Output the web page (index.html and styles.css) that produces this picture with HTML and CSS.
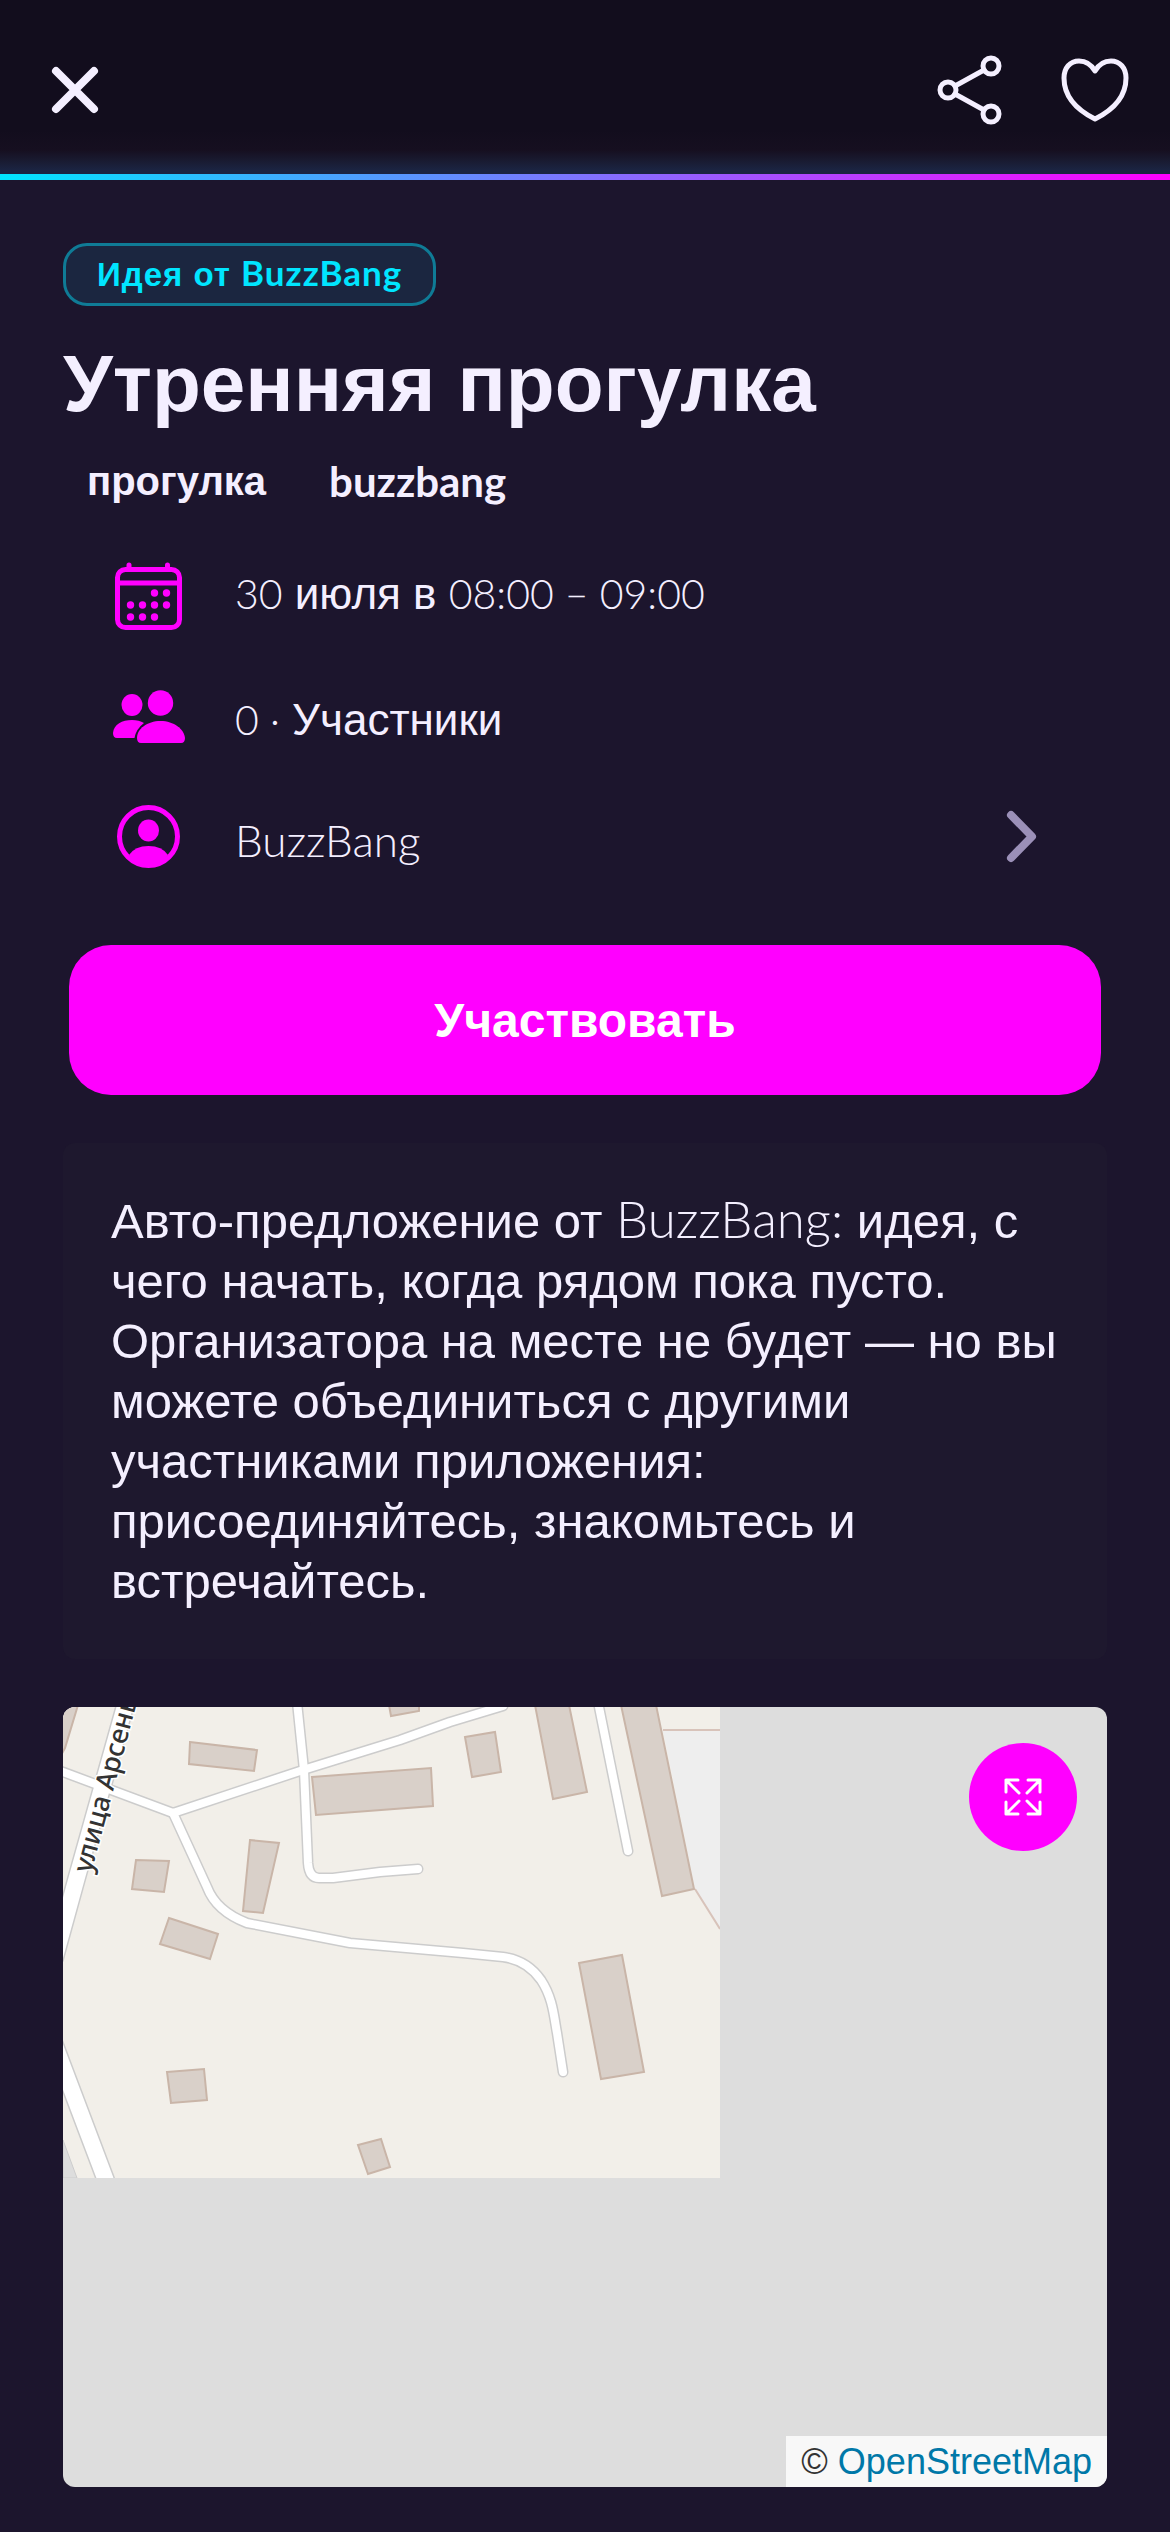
FILE: index.html
```html
<!DOCTYPE html>
<html lang="ru">
<head>
<meta charset="utf-8">
<meta name="viewport" content="width=device-width, initial-scale=1">
<title>Утренняя прогулка</title>
<link rel="stylesheet" href="styles.css">
</head>
<body>
<header class="topbar">
  <button class="icon-button" type="button" aria-label="Закрыть">
    <svg width="70" height="70" viewBox="0 0 70 70"><path d="M16 16 54 54M54 16 16 54" stroke-width="8"/></svg>
  </button>
  <div class="topbar-actions">
    <button class="icon-button" type="button" aria-label="Поделиться">
      <svg width="70" height="70" viewBox="0 0 70 70"><g stroke-width="5"><circle cx="13" cy="35" r="8"/><circle cx="56" cy="11" r="8"/><circle cx="56" cy="59" r="8"/><path d="M20 31 49 15M20 39 49 55"/></g></svg>
    </button>
    <button class="icon-button" type="button" aria-label="В избранное">
      <svg width="70" height="70" viewBox="0 0 70 70"><path d="M35 16C31 9 26 6 19 6C10 6 4 13 4 23C4 42 17 55 35 64C53 55 66 42 66 23C66 13 60 6 51 6C44 6 39 9 35 16Z" stroke-width="5"/></svg>
    </button>
  </div>
</header>
<main class="event">
  <p class="badge">Идея от <span class="latin">BuzzBang</span></p>
  <h1 class="title">Утренняя прогулка</h1>
  <ul class="tags"><li>прогулка</li><li class="latin">buzzbang</li></ul>
  <ul class="details">
    <li class="detail detail-date">
      <svg class="detail-icon" width="72" height="72" viewBox="0 0 72 72">
        <g fill="none" stroke="currentColor" stroke-width="5"><rect x="4.500" y="11.500" width="62" height="58" rx="8"/><path d="M5 25H66"/><path d="M16 7V11M54.500 7V11" stroke-linecap="round"/></g>
        <g fill="currentColor"><circle cx="41.500" cy="35" r="3.700"/><circle cx="53.500" cy="35" r="3.700"/><circle cx="17.500" cy="47" r="3.700"/><circle cx="29.500" cy="47" r="3.700"/><circle cx="41.500" cy="47" r="3.700"/><circle cx="53.500" cy="47" r="3.700"/><circle cx="17.500" cy="59" r="3.700"/><circle cx="29.500" cy="59" r="3.700"/><circle cx="41.500" cy="59" r="3.700"/></g>
      </svg>
      <span><span class="latin number">30</span> июля в <span class="latin number">08:00 – 09:00</span></span>
    </li>
    <li class="detail">
      <svg class="detail-icon" width="72" height="72" viewBox="0 0 72 72" fill="currentColor">
        <ellipse cx="19" cy="21" rx="10.500" ry="11"/><circle cx="47.500" cy="19" r="12.700"/>
        <path d="M0 49C1 40 9 36 19 36Q26 36 31 39Q23 45 21.500 54H4Q0 54 0 49Z"/>
        <path d="M24 54C24 45 34 37 47.500 37C61 37 71 45 72 54Q72 59 68 59H28Q24 59 24 54Z"/>
      </svg>
      <span><span class="latin number">0 ·</span> Участники</span>
    </li>
    <li>
      <a class="detail" href="#organizer">
        <svg class="detail-icon" width="72" height="72" viewBox="0 0 72 72">
          <circle cx="35.500" cy="32.500" r="29" fill="none" stroke="currentColor" stroke-width="5"/>
          <g fill="currentColor"><ellipse cx="35.500" cy="26.500" rx="10.500" ry="11"/><path d="M16 51Q22 42 35.500 42Q49 42 55 51Q47 61.500 35.500 61.500Q24 61.500 16 51Z"/></g>
        </svg>
        <span class="latin">BuzzBang</span>
        <svg class="chevron" width="36" height="60" viewBox="0 0 36 60" fill="none" stroke="currentColor" stroke-width="8" stroke-linecap="round" stroke-linejoin="round"><path d="M6 5 27 26.500 6 48"/></svg>
      </a>
    </li>
  </ul>
  <button class="join" type="button">Участвовать</button>
  <p class="description">Авто-предложение от <span class="latin">BuzzBang:</span> идея, с чего начать, когда рядом пока пусто. Организатора на месте не будет — но вы можете объединиться с другими участниками приложения: присоединяйтесь, знакомьтесь и встречайтесь.</p>
  <section class="map" aria-label="Карта">
    <svg class="tile" width="657" height="471" viewBox="0 0 657 471">
      <defs>
        <g id="paths">
          <path d="M-5 63 0 65 110 106 240 63 337 33 387 15 440-1"/>
          <path d="M110 106 144 180Q153 204 184 216L287 236 400 246 440 250Q464 253 478 273C490 291 491 310 494 326L500 365"/>
          <path d="M234-5 241 63 245 156Q246 171 256 171H270L317 165 355 162"/>
          <path d="M535-5 565 144"/>
        </g>
        <g id="streets"><path d="M66-15 14 170-8 250"/><path d="M-12 328 42 471 50 495"/></g>
      </defs>
      <path d="M0 0H657V471H0Z" fill="#f2efe9"/>
      <path d="M0 433 14 471H0Z" fill="#ddd" stroke="#ccc"/>
      <path d="M600 23H657V222L632 182Z" fill="#eee"/>
      <path d="M600 23H657M632 182 657 222" stroke="#d8c3ba" stroke-width="2"/>
      <g fill="none" stroke-linecap="round" stroke-linejoin="round">
        <use href="#paths" stroke="#ccc" stroke-width="11"/>
        <use href="#streets" stroke="#ccc" stroke-width="19"/>
        <use href="#paths" stroke="#fff" stroke-width="8"/>
        <use href="#streets" stroke="#fff" stroke-width="16"/>
      </g>
      <path fill="#d9d0c9" stroke="#c9b5a8" stroke-width="2" d="M-3-2H15L2 41-3 50ZM127 35 194 43 191 64 126 57ZM249 70 368 61 370 99 253 108ZM187 133 216 136 200 206 180 204ZM73 153 106 154 101 185 69 182ZM106 211 155 227 147 252 97 237ZM326-2H356V4L328 9ZM402 30 432 25 438 65 409 70ZM472-2H506L524 85 490 92ZM558-2H593L631 182 599 189ZM516 256 559 248 581 365 538 372ZM104 365 141 362 144 393 108 396ZM295 438 318 432 327 460 305 467Z"/>
      <text class="street-name" transform="translate(28 167) rotate(-75)">улица Арсень</text>
    </svg>
    <button class="expand" type="button" aria-label="Развернуть карту">
      <svg width="42" height="42" viewBox="0 0 42 42" fill="none" stroke="currentColor" stroke-width="3" stroke-linecap="round" stroke-linejoin="round"><path d="M16 4H4V16M4 4 17 17M26 4H38V16M38 4 25 17M16 38H4V26M4 38 17 25M26 38H38V26M38 38 25 25"/></svg>
    </button>
    <p class="credit">© <a href="#osm">OpenStreetMap</a></p>
  </section>
</main>
</body>
</html>
```
FILE: styles.css
```css
* { box-sizing: border-box; }
body {
  margin: 0;
  background: #1c152d;
  color: #f4efff;
  font-family: "Liberation Sans", Arial, sans-serif;
}
p, h1, ul { margin: 0; padding: 0; }
ul { list-style: none; }
button { border: 0; padding: 0; font: inherit; cursor: pointer; }
a { color: inherit; text-decoration: none; }
svg { display: block; flex: none; }
.latin { font-family: Lato, "Open Sans", sans-serif; }
p .latin { line-height: 1; }

.topbar {
  display: flex;
  align-items: center;
  justify-content: space-between;
  height: 180px;
  padding: 0 40px;
  border-bottom: 6px solid;
  border-image: linear-gradient(to right, #00e5ff, #ff00ff) 1;
  background: linear-gradient(to top, #1b2442 4px, #191a30 14px, #160f20 24px, #120d1d 44px);
}
.topbar-actions { display: flex; gap: 55px; }
.icon-button { background: none; color: inherit; padding-top: 6px; }
.icon-button svg { fill: none; stroke: currentColor; stroke-linecap: round; stroke-linejoin: round; }

.event { display: flex; flex-direction: column; align-items: stretch; padding: 63px 63px 45px; }
.badge {
  align-self: flex-start;
  padding: 0 31px;
  border: 3px solid #0f7b96;
  border-radius: 24px;
  background: #1b2640;
  color: #00e5ff;
  font-size: 33px;
  font-weight: 700;
  line-height: 57px;
  letter-spacing: 1px;
}
.badge .latin { font-size: 35px; }
.title { margin-top: 33px; font-size: 80px; line-height: 90px; font-weight: 700; }
.tags { display: flex; gap: 63px; margin-top: 28px; padding-left: 24px; font-size: 40px; line-height: 48px; font-weight: 700; }
.tags .latin { font-size: 42px; }
.details { margin-top: 23px; padding: 0 66px 0 50px; font-size: 44px; line-height: 48px; }
.details .latin { font-weight: 300; }
.details .number { font-size: 41px; }
.detail { display: flex; align-items: center; gap: 50px; height: 120px; }
.detail-date { height: 132px; }
.detail-icon { color: #ff00ff; }
.chevron { margin-left: auto; color: #9b90b8; }
.join {
  height: 150px;
  margin: 45px 6px 48px;
  border-radius: 42px;
  background: #ff00ff;
  color: #fff;
  font-size: 48px;
  font-weight: 700;
}
.description { padding: 48px; border-radius: 12px; background: #1e182e; font-size: 49px; line-height: 60px; }
.description .latin { font-size: 51px; font-weight: 300; }

.map { position: relative; height: 780px; margin-top: 48px; overflow: hidden; border-radius: 12px; background: #ddd; }
.street-name { font-family: "Noto Sans", sans-serif; font-size: 27px; font-weight: 500; fill: #333; stroke: #fff; stroke-width: 3px; paint-order: stroke; }
.expand {
  position: absolute;
  top: 36px;
  right: 30px;
  display: grid;
  place-items: center;
  width: 108px;
  height: 108px;
  border-radius: 50%;
  background: #ff00ff;
  color: #fff;
}
.credit { position: absolute; right: 0; bottom: 0; padding: 0 15px; background: #f8f8f8; color: #333; font-size: 36px; line-height: 51px; }
.credit a { color: #0078a8; }
```
